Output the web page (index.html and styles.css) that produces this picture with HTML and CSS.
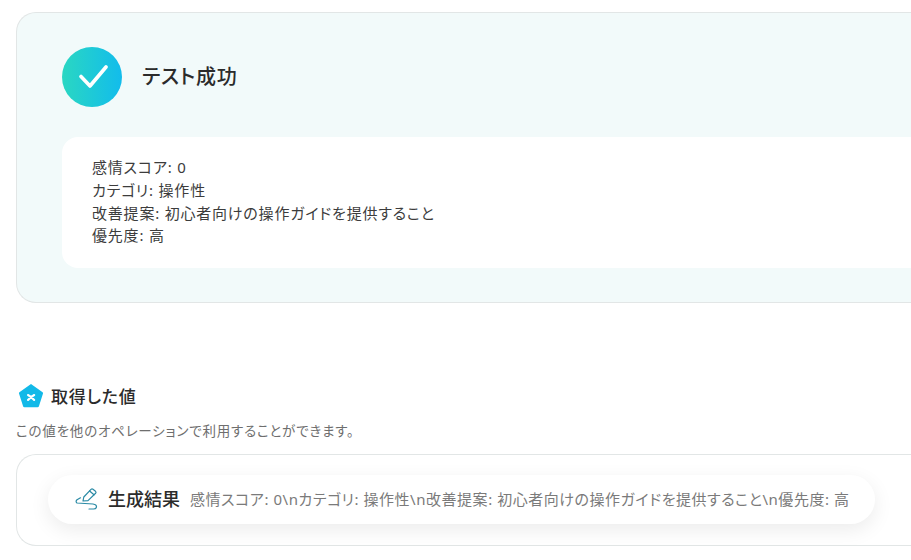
FILE: index.html
```html
<!DOCTYPE html>
<html lang="ja">
<head>
  <meta charset="UTF-8">
  <meta name="viewport" content="width=device-width, initial-scale=1.0">
  <title>テスト成功</title>
  <link rel="stylesheet" href="styles.css">
</head>
<body>
  <div class="page">
    <section class="result-card">
      <div class="result-head">
        <div class="check-badge">
          <svg width="32" height="26" viewBox="0 0 32 26" fill="none">
            <path d="M5 12.5 L14 22 L30 3" stroke="#fff" stroke-width="3.6" stroke-linecap="round" stroke-linejoin="round"/>
          </svg>
        </div>
        <h2 class="result-title">テスト成功</h2>
      </div>
      <div class="result-body">
        <p>感情スコア: 0</p>
        <p>カテゴリ: 操作性</p>
        <p>改善提案: 初心者向けの操作ガイドを提供すること</p>
        <p>優先度: 高</p>
      </div>
    </section>

    <div class="values-head">
      <svg class="pentagon" width="26" height="26" viewBox="0 0 26 26">
        <path d="M13 1 L24.6 9.2 Q25.3 9.8 25 10.6 L21 23 Q20.7 24.2 19.6 24.2 L6.4 24.2 Q5.3 24.2 5 23 L1 10.6 Q0.7 9.8 1.4 9.2 Z" fill="#12b9e8"/>
        <path d="M10 12 Q13.2 13.6 16.2 17 M16.2 12 Q13 13.6 10 17" stroke="#fff" stroke-width="2.1" stroke-linecap="round" fill="none"/>
      </svg>
      <h3 class="values-title">取得した値</h3>
    </div>
    <p class="values-note">この値を他のオペレーションで利用することができます。</p>

    <section class="values-card">
      <div class="value-pill">
        <svg class="pen-icon" width="23" height="23" viewBox="0 0 23 23" fill="none" stroke="#2a8aa5" stroke-width="1.2" stroke-linecap="round" stroke-linejoin="round">
          <path d="M8 13 L8.8 9 L16 1.4 Q17 0.5 18 1.3 L20.5 3.3 Q21.4 4.2 20.6 5.2 L13 12.6 Z"/>
          <path d="M14.6 3 L19 6.8"/>
          <path d="M5.5 9.8 L2 11.8 Q0.2 13.5 2 15 L18 16 Q21.5 16.5 21.5 18.5 Q21.5 21 18.5 21 L14 21"/>
        </svg>
        <span class="value-label">生成結果</span>
        <span class="value-text">感情スコア: 0\nカテゴリ: 操作性\n改善提案: 初心者向けの操作ガイドを提供すること\n優先度: 高</span>
      </div>
    </section>
  </div>
</body>
</html>
```

FILE: styles.css
```css
html, body {
  margin: 0;
  height: 560px;
  overflow: hidden;
  background: #fff;
}
body {
  font-family: "Noto Sans", "Noto Sans CJK JP", sans-serif;
  font-feature-settings: "palt";
  letter-spacing: 0.05em;
  color: #2b2b2b;
}
.page {
  padding: 12px 0 0 16px;
}
.result-card {
  height: 291px;
  box-sizing: border-box;
  padding: 34px 0 34px 45px;
  background: #f2fafa;
  border: 1px solid #e2e6e6;
  border-right: 0;
  border-radius: 20px 0 0 20px;
}
.result-head {
  display: flex;
  align-items: center;
  gap: 20px;
}
.check-badge {
  width: 60px;
  height: 60px;
  border-radius: 50%;
  display: flex;
  align-items: center;
  justify-content: center;
  background: linear-gradient(90deg, #2ad7c2, #12bcec);
}
.result-title {
  margin: -4px 0 0;
  font-size: 20px;
  font-weight: 500;
}
.result-body {
  margin-top: 30px;
  padding: 19px 30px 21px;
  background: #fff;
  border-radius: 16px 0 0 16px;
  font-size: 15px;
  line-height: 22.8px;
  color: #3c3c3c;
}
.result-body p {
  margin: 0;
}
.values-head {
  display: flex;
  align-items: center;
  gap: 7px;
  margin: 80px 0 0 2px;
}
.values-title {
  margin: -2px 0 0;
  font-size: 17px;
  font-weight: 500;
}
.values-note {
  margin: 13px 0 0;
  font-size: 13.5px;
  line-height: 18px;
  color: #6e6e6e;
}
.values-card {
  height: 92px;
  box-sizing: border-box;
  margin-top: 14px;
  padding: 20px 0 0 31px;
  border: 1px solid #e2e6e6;
  border-right: 0;
  border-radius: 20px 0 0 20px;
}
.value-pill {
  display: flex;
  align-items: center;
  box-sizing: border-box;
  width: 827px;
  height: 49px;
  padding: 0 25px 0 27px;
  background: #fff;
  border-radius: 25px;
  box-shadow: 0 6px 20px rgba(0, 0, 0, 0.08);
}
.pen-icon {
  flex: none;
  margin-right: 10px;
}
.value-label {
  flex: none;
  margin-top: -3px;
  margin-right: 10px;
  font-size: 18px;
  font-weight: 500;
  letter-spacing: 0;
}
.value-text {
  margin-top: -3px;
  font-size: 15px;
  letter-spacing: 0.036em;
  color: #7a7a7a;
  white-space: nowrap;
}
```
